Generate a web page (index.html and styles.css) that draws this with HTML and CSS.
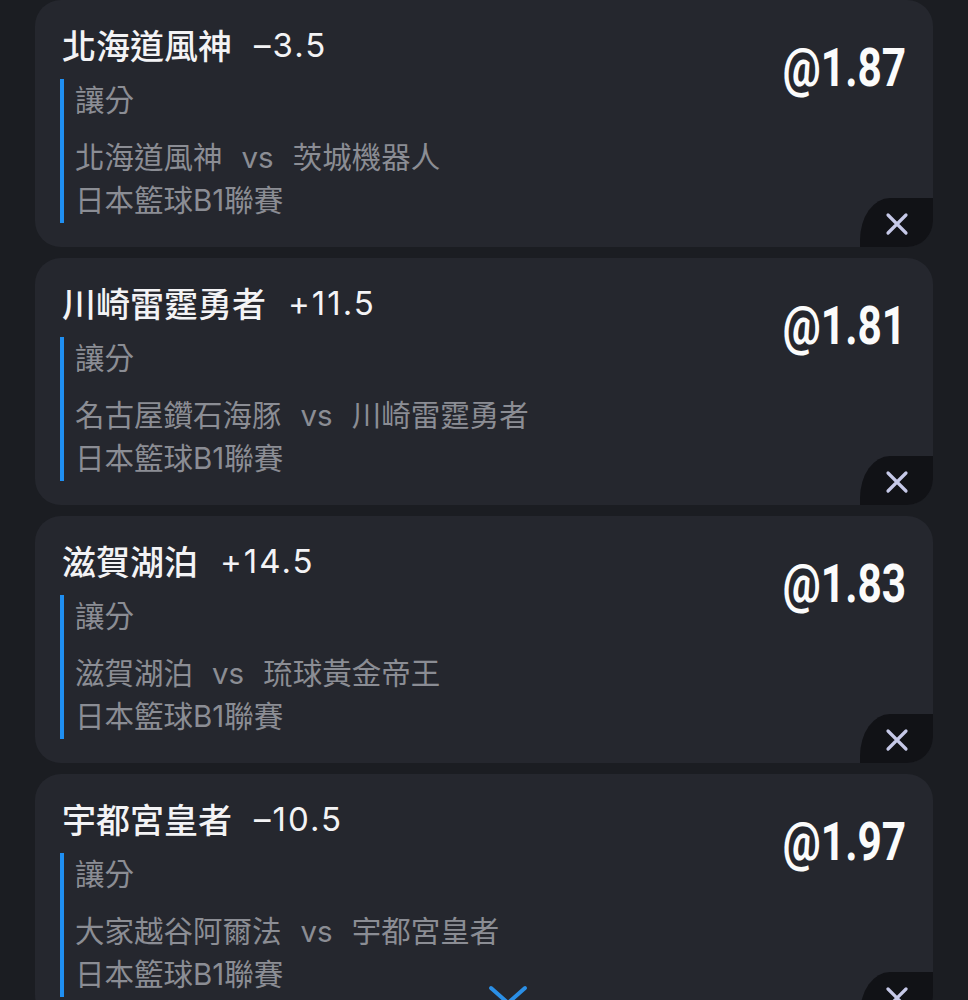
FILE: index.html
```html
<!DOCTYPE html>
<html lang="zh-Hant">
<head>
<meta charset="utf-8">
<title>投注單</title>
<link rel="stylesheet" href="styles.css">
</head>
<body>
<div class="list">
  <div class="card">
    <div class="main">
      <div class="title"><span class="team">北海道風神</span><span class="line">–3.5</span></div>
      <div class="detail">
        <div class="market">讓分</div>
        <div class="match">北海道風神<span class="vs">vs</span>茨城機器人</div>
        <div class="league">日本籃球B1聯賽</div>
      </div>
    </div>
    <div class="odds">@1.87</div>
    <button class="close" aria-label="移除"><svg viewBox="0 0 24 24" width="24" height="24"><path d="M3 3L21 21M21 3L3 21"/></svg></button>
  </div>
  <div class="card">
    <div class="main">
      <div class="title"><span class="team">川崎雷霆勇者</span><span class="line">+11.5</span></div>
      <div class="detail">
        <div class="market">讓分</div>
        <div class="match">名古屋鑽石海豚<span class="vs">vs</span>川崎雷霆勇者</div>
        <div class="league">日本籃球B1聯賽</div>
      </div>
    </div>
    <div class="odds">@1.81</div>
    <button class="close" aria-label="移除"><svg viewBox="0 0 24 24" width="24" height="24"><path d="M3 3L21 21M21 3L3 21"/></svg></button>
  </div>
  <div class="card">
    <div class="main">
      <div class="title"><span class="team">滋賀湖泊</span><span class="line">+14.5</span></div>
      <div class="detail">
        <div class="market">讓分</div>
        <div class="match">滋賀湖泊<span class="vs">vs</span>琉球黃金帝王</div>
        <div class="league">日本籃球B1聯賽</div>
      </div>
    </div>
    <div class="odds">@1.83</div>
    <button class="close" aria-label="移除"><svg viewBox="0 0 24 24" width="24" height="24"><path d="M3 3L21 21M21 3L3 21"/></svg></button>
  </div>
  <div class="card">
    <div class="main">
      <div class="title"><span class="team">宇都宮皇者</span><span class="line">–10.5</span></div>
      <div class="detail">
        <div class="market">讓分</div>
        <div class="match">大家越谷阿爾法<span class="vs">vs</span>宇都宮皇者</div>
        <div class="league">日本籃球B1聯賽</div>
      </div>
    </div>
    <div class="odds">@1.97</div>
    <button class="close" aria-label="移除"><svg viewBox="0 0 24 24" width="24" height="24"><path d="M3 3L21 21M21 3L3 21"/></svg></button>
  </div>
</div>
<div class="scroll-down"><svg viewBox="0 0 40 24" width="40" height="24"><path d="M3 3L20 18L37 3"/></svg></div>
</body>
</html>
```
FILE: styles.css
```css
html, body {
  margin: 0;
  padding: 0;
  background: #1b1d22;
  height: 1000px;
  overflow: hidden;
}

body {
  font-family: Inter, "Noto Sans CJK TC", sans-serif;
  color: #f2f2f4;
}

.list {
  display: flex;
  flex-direction: column;
  gap: 11px;
  padding: 0 35px;
}

.card {
  position: relative;
  display: flex;
  justify-content: space-between;
  align-items: flex-start;
  box-sizing: border-box;
  height: 247px;
  flex: 0 0 247px;
  padding: 22px 27px 0 27px;
  background: #25272e;
  border-radius: 26px;
}

.title {
  display: flex;
  align-items: center;
  height: 44px;
  font-size: 34px;
  font-weight: 500;
  color: #f3f3f5;
}

.title .team {
  font-family: "Noto Sans CJK TC", sans-serif;
}

.title .line {
  font-family: Inter, sans-serif;
  font-size: 33px;
  font-weight: 400;
  letter-spacing: 2px;
  margin-left: 22px;
  padding-top: 2px;
}

.detail {
  margin-top: 13px;
  margin-left: -2px;
  border-left: 4px solid #1f8ff2;
  padding-left: 11px;
  padding-bottom: 2px;
  font-size: 29.5px;
  color: #8b8d94;
}

.market {
  line-height: 42px;
}

.match {
  margin-top: 14px;
  line-height: 44px;
}

.match .vs {
  margin: 0 19px;
}

.league {
  line-height: 42px;
}

.odds {
  margin-top: 20px;
  font-family: Roboto, sans-serif;
  font-weight: 700;
  font-size: 53px;
  line-height: 53px;
  color: #fbfbfb;
  transform: scaleX(0.8);
  transform-origin: right center;
  white-space: nowrap;
}

.close {
  position: absolute;
  right: 0;
  bottom: 0;
  width: 73px;
  height: 49px;
  padding: 0;
  border: 0;
  background: #111216;
  border-radius: 30px 0 26px 0 / 42px 0 26px 0;
  display: flex;
  align-items: center;
  justify-content: center;
  padding-top: 2px;
  cursor: pointer;
}

.close svg {
  fill: none;
  stroke: #c6c9e8;
  stroke-width: 3.2;
  stroke-linecap: round;
}

.scroll-down {
  position: fixed;
  left: 488px;
  top: 985px;
  width: 40px;
  height: 24px;
}

.scroll-down svg {
  display: block;
  fill: none;
  stroke: #2b8fe6;
  stroke-width: 4;
  stroke-linecap: round;
  stroke-linejoin: round;
}
```
